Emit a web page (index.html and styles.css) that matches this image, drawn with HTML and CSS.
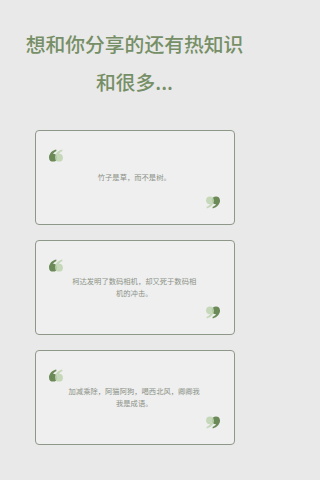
FILE: index.html
```html
<!DOCTYPE html>
<html lang="zh">
<head>
<meta charset="utf-8">
<link rel="stylesheet" href="styles.css">
</head>
<body>
<svg width="0" height="0" class="defs">
  <defs>
    <g id="mark">
      <circle cx="4" cy="8.2" r="3.9"/>
      <path d="M0.2 8.4 C0 4.2 2.6 1.2 7.2 0 L7.5 1.4 C4.8 2.4 3.3 4.4 3.6 6.4 Z"/>
    </g>
  </defs>
</svg>
<main class="page">
  <h1 class="title">想和你分享的还有热知识<br>和很多...</h1>
  <section class="card">
    <svg class="q q-open" viewBox="0 0 16 13" width="16" height="13"><use href="#mark" x="0" y="0.5" class="dark"/><use href="#mark" x="6" y="0.5" class="light"/></svg>
    <p class="text">竹子是草，而不是树。</p>
    <svg class="q q-close" viewBox="0 0 16 13" width="16" height="13"><g transform="rotate(180 8 6.5)"><use href="#mark" x="0" y="0.5" class="dark"/><use href="#mark" x="6" y="0.5" class="light"/></g></svg>
  </section>
  <section class="card">
    <svg class="q q-open" viewBox="0 0 16 13" width="16" height="13"><use href="#mark" x="0" y="0.5" class="dark"/><use href="#mark" x="6" y="0.5" class="light"/></svg>
    <p class="text">柯达发明了数码相机，却又死于数码相<br>机的冲击。</p>
    <svg class="q q-close" viewBox="0 0 16 13" width="16" height="13"><g transform="rotate(180 8 6.5)"><use href="#mark" x="0" y="0.5" class="dark"/><use href="#mark" x="6" y="0.5" class="light"/></g></svg>
  </section>
  <section class="card">
    <svg class="q q-open" viewBox="0 0 16 13" width="16" height="13"><use href="#mark" x="0" y="0.5" class="dark"/><use href="#mark" x="6" y="0.5" class="light"/></svg>
    <p class="text">加减乘除，阿猫阿狗，喝西北风，卿卿我<br>我是成语。</p>
    <svg class="q q-close" viewBox="0 0 16 13" width="16" height="13"><g transform="rotate(180 8 6.5)"><use href="#mark" x="0" y="0.5" class="dark"/><use href="#mark" x="6" y="0.5" class="light"/></g></svg>
  </section>
</main>
</body>
</html>
```
FILE: styles.css
```css
html, body {
  margin: 0;
  padding: 0;
  background: #e9e9e9;
}
.defs {
  position: absolute;
  width: 0;
  height: 0;
}
.page {
  width: 269px;
  display: flex;
  flex-direction: column;
  align-items: center;
  padding-top: 25px;
  font-family: "Noto Sans CJK SC", "Noto Sans", sans-serif;
}
.title {
  margin: 0 0 29px;
  font-size: 19.8px;
  line-height: 38px;
  font-weight: 500;
  color: #768f66;
  text-align: center;
  letter-spacing: 0;
}
.card {
  box-sizing: border-box;
  width: 200px;
  height: 95px;
  margin-bottom: 15px;
  margin-left: 1px;
  border: 1.5px solid #8e9888;
  border-radius: 4px;
  background: #efefef;
  padding: 18px 14px 15px 12.5px;
  display: flex;
  flex-direction: column;
  justify-content: space-between;
}
.q {
  display: block;
  flex: none;
}
.q-close {
  align-self: flex-end;
}
.dark {
  fill: #6b8a58;
}
.light {
  fill: #bfd4b1;
  opacity: 0.85;
}
.text {
  margin: 0 0 4px;
  font-size: 7.3px;
  line-height: 12px;
  color: #8b9187;
  text-align: center;
}
```
